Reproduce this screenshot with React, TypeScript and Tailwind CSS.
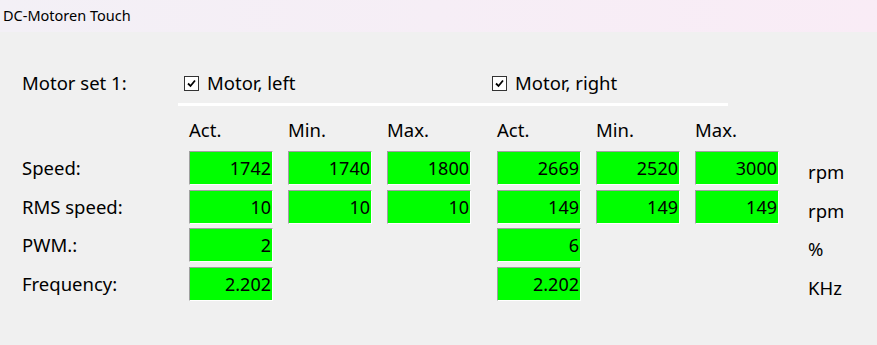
import React from 'react';

const font = { fontFamily: '"Segoe UI", "Noto Sans", "Open Sans", sans-serif' };

function Check() {
  return (
    <span className="inline-flex w-[15px] h-[15px] items-center justify-center border border-[#333] bg-white shrink-0">
      <svg width="9" height="9" viewBox="0 0 9 9">
        <path d="M1 4.5 L3.5 7 L8 1.5" fill="none" stroke="#000" strokeWidth="1.8" />
      </svg>
    </span>
  );
}

function Field({ value }: { value?: string }) {
  if (value === undefined) return <div className="w-[84px] h-[34px]" />;
  return (
    <div className="w-[84px] h-[34px] bg-[#00ff00] border-t border-l border-[#a0a0a0] border-b-white border-r-white border-b border-r flex items-center justify-end pr-[1px] text-[18px] text-black leading-none">
      {value}
    </div>
  );
}

const rows = [
  { label: 'Speed:', left: ['1742', '1740', '1800'], right: ['2669', '2520', '3000'], unit: 'rpm' },
  { label: 'RMS speed:', left: ['10', '10', '10'], right: ['149', '149', '149'], unit: 'rpm' },
  { label: 'PWM.:', left: ['2'], right: ['6'], unit: '%' },
  { label: 'Frequency:', left: ['2.202'], right: ['2.202'], unit: 'KHz' },
];

function Group({ values }: { values: string[] }) {
  return (
    <div className="flex gap-[15px]">
      {[0, 1, 2].map((i) => (
        <Field key={i} value={values[i]} />
      ))}
    </div>
  );
}

export default function App() {
  return (
    <div className="w-[877px] h-[345px] bg-[#f0f0f0] text-black overflow-hidden" style={font}>
      <div className="h-[32px] bg-gradient-to-r from-[#f3f0f6] to-[#f9ecf6] flex items-center pl-[3px] text-[14.5px] text-black">
        DC-Motoren Touch
      </div>

      <div className="pl-[22px] pt-[40px] text-[18.5px]">
        <div className="flex items-center h-[22px]">
          <div className="w-[162px]">Motor set 1:</div>
          <div className="flex items-center gap-[8px] w-[308px]">
            <Check />
            <span>Motor, left</span>
          </div>
          <div className="flex items-center gap-[8px]">
            <Check />
            <span>Motor, right</span>
          </div>
        </div>
        <div className="ml-[156px] mt-[9px] w-[550px] h-[3px] bg-white" />

        <div className="flex items-center h-[24px] mt-[12px]">
          <div className="w-[167px]" />
          <div className="flex gap-[15px]">
            <div className="w-[84px]">Act.</div>
            <div className="w-[84px]">Min.</div>
            <div className="w-[84px]">Max.</div>
          </div>
          <div className="w-[26px]" />
          <div className="flex gap-[15px]">
            <div className="w-[84px]">Act.</div>
            <div className="w-[84px]">Min.</div>
            <div className="w-[84px]">Max.</div>
          </div>
        </div>

        <div className="flex flex-col gap-[4.67px] mt-[9px]">
          {rows.map((r) => (
            <div key={r.label} className="flex items-start">
              <div className="w-[167px] h-[34px] flex items-center">{r.label}</div>
              <Group values={r.left} />
              <div className="w-[26px]" />
              <Group values={r.right} />
              <div className="ml-[29px] h-[34px] pt-[12px] leading-none">{r.unit}</div>
            </div>
          ))}
        </div>
      </div>
    </div>
  );
}
